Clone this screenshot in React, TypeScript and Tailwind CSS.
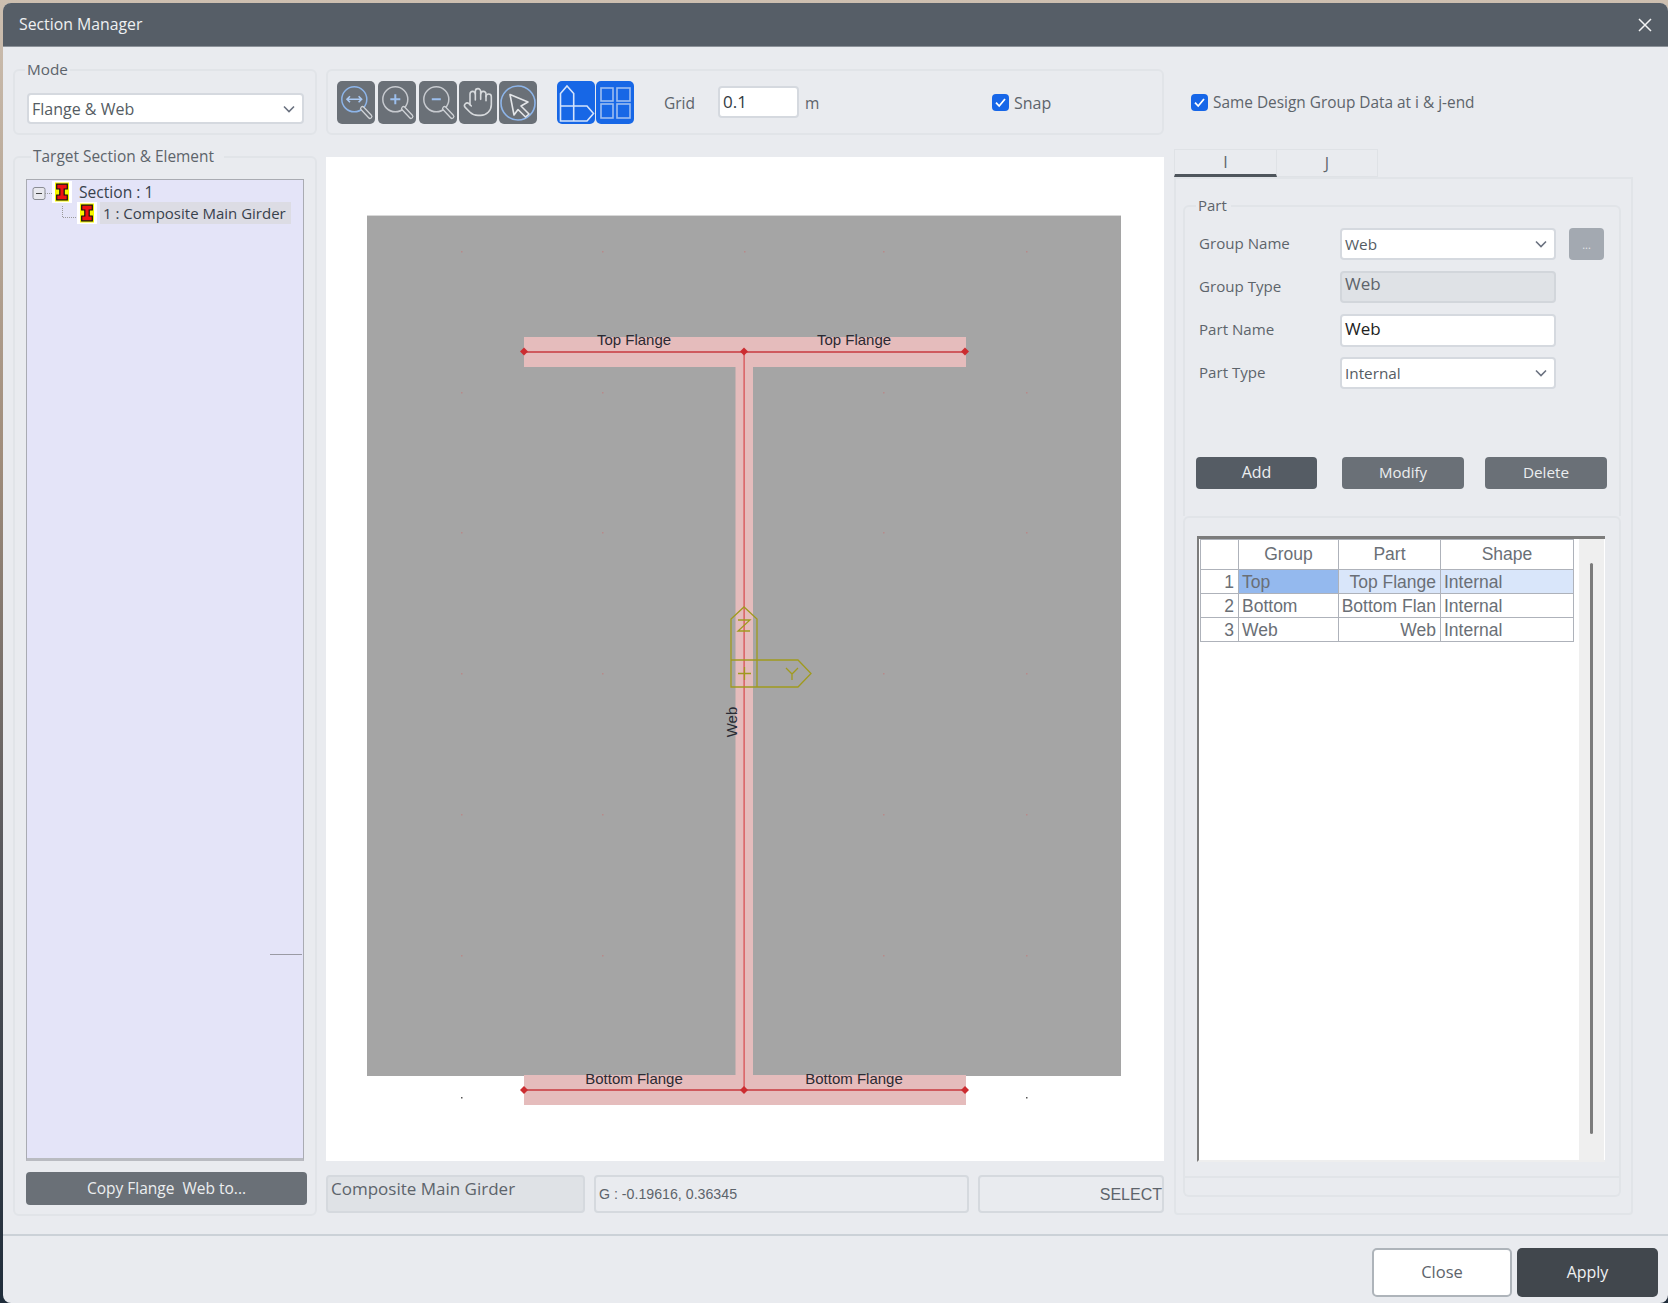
import React from "react";
import { Hand } from "lucide-react";

const Chevron = () => (
  <svg width="14" height="14" viewBox="0 0 14 14" className="shrink-0">
    <path d="M2 4.5 L7 9.5 L12 4.5" fill="none" stroke="#6b7280" strokeWidth="1.6" />
  </svg>
);

const Check = () => (
  <svg width="17" height="17" viewBox="0 0 17 17" className="shrink-0">
    <rect width="17" height="17" rx="4" fill="#1666e8" />
    <path d="M4 8.6 L7.2 12 L13 5" fill="none" stroke="#fff" strokeWidth="1.8" />
  </svg>
);

const IBeam = () => (
  <svg width="20" height="22" viewBox="0 0 20 22" className="shrink-0">
    <rect width="20" height="22" fill="#fff" />
    <rect x="3" y="1.5" width="14" height="19" fill="#f6f600" />
    <path d="M4.7 3.2 H15.3 V8 H12.2 V14 H15.3 V18.8 H4.7 V14 H7.8 V8 H4.7 Z" fill="#ee1111" stroke="#111" strokeWidth="1.2" />
  </svg>
);

const Glass = ({ ring, inner }: { ring: string; inner: React.ReactNode }) => (
  <svg width="38" height="43" viewBox="0 0 38 43">
    <circle cx="17.3" cy="18.3" r="12.5" fill="none" stroke={ring} strokeWidth="1.5" />
    {inner}
    <path d="M25.5 27.5 L33 35.5" stroke="#cfd2d6" strokeWidth="5" strokeLinecap="round" />
    <path d="M25.5 27.5 L33 35.5" stroke="#6a7077" strokeWidth="2.4" strokeLinecap="round" />
  </svg>
);

const ToolBtn = ({ children, blue, className }: { children: React.ReactNode; blue?: boolean; className: string }) => (
  <div className={`w-[38px] h-[43px] rounded-[5px] flex items-center justify-center shrink-0 ${blue ? "bg-[#1767e6]" : "bg-[#6a7077]"} ${className}`}>
    {children}
  </div>
);

const Group = ({ legend, legendClass, className, children }: { legend: string; legendClass: string; className: string; children: React.ReactNode }) => (
  <div className={`relative border-2 border-[#e1e4e8] rounded-[6px] ${className}`}>
    <span className={`absolute bg-[#e9ebef] px-[2px] leading-[20px] text-[#5d646b] whitespace-nowrap ${legendClass}`}>{legend}</span>
    {children}
  </div>
);

const FieldRow = ({ label, children }: { label: string; children: React.ReactNode }) => (
  <div className="flex items-center h-[32px]">
    <span className="w-[144px] shrink-0 pl-[3px] pb-[2px] text-[15.1px] text-[#5d646b] whitespace-nowrap">{label}</span>
    {children}
  </div>
);

const SelectBox = ({ value, className }: { value: string; className: string }) => (
  <div className={`flex items-center justify-between bg-white border-2 border-[#d5d9df] rounded-[4px] pr-[6px] text-[#555c63] ${className}`}>
    <span>{value}</span>
    <Chevron />
  </div>
);

const ActionBtn = ({ label, className }: { label: string; className: string }) => (
  <div className={`h-[32px] rounded-[4px] flex items-center justify-center pb-[2px] text-[#eceef0] ${className}`}>{label}</div>
);

const rows = [
  { n: "1", g: "Top", p: "Top Flange", s: "Internal", sel: true },
  { n: "2", g: "Bottom", p: "Bottom Flan", s: "Internal", sel: false },
  { n: "3", g: "Web", p: "Web", s: "Internal", sel: false },
];

const dotXs = [461, 602, 744, 883, 1026];
const dotYs = [251, 392, 532, 673, 814, 955];

const Diamond = ({ x, y }: { x: number; y: number }) => (
  <path d={`M${x - 4} ${y} L${x} ${y - 4} L${x + 4} ${y} L${x} ${y + 4} Z`} fill="#cc2c30" />
);

const Section = () => (
  <svg width="838" height="1004" viewBox="326 157 838 1004" className="block">
    <rect x="367" y="216" width="754" height="860" fill="#a5a5a5" />
    <rect x="367" y="215" width="754" height="1" fill="#d8d8d8" />
    {dotYs.map((y) => dotXs.map((x) => <rect key={`${x}-${y}`} x={x} y={y} width="1.5" height="1.5" fill="#b88a8a" />))}
    {dotXs.map((x) => <rect key={x} x={x} y="1097" width="1.5" height="1.5" fill="#555" />)}
    <rect x="524" y="337" width="442" height="30" fill="#e5bcbc" />
    <rect x="735.5" y="367" width="17.5" height="709" fill="#e5bcbc" />
    <rect x="524" y="1075" width="442" height="30" fill="#e5bcbc" />
    <rect x="524" y="351" width="441" height="2" fill="#cf5a5e" />
    <rect x="524" y="1089" width="441" height="2" fill="#cf5a5e" />
    <rect x="743.5" y="352" width="1.2" height="738" fill="#d8484c" />
    <Diamond x={524} y={351.5} />
    <Diamond x={744} y={351.5} />
    <Diamond x={965} y={351.5} />
    <Diamond x={524} y={1090} />
    <Diamond x={744} y={1090} />
    <Diamond x={965} y={1090} />
    <g fontFamily="'Liberation Sans', Arial, sans-serif" fontSize="15" fill="#2a2a33" textAnchor="middle">
      <text x="634" y="345">Top Flange</text>
      <text x="854" y="345">Top Flange</text>
      <text x="634" y="1084">Bottom Flange</text>
      <text x="854" y="1084">Bottom Flange</text>
      <text transform="translate(737 722) rotate(-90)">Web</text>
    </g>
    <g fill="none" stroke="#a09a1e" strokeWidth="1.3">
      <path d="M731 660 V619 L744 607 L757 619 V687 H731 V660 H798 L811 673.5 L798 687 H757" />
      <path d="M738 620 H750 L738 631 H750" />
      <path d="M738 673.5 H751 M744.5 667 V680" />
      <path d="M786 668 L792 674 L798 668 M792 674 V680" />
    </g>
  </svg>
);

export default function App() {
  return (
    <div className="w-[1668px] h-[1303px] overflow-hidden pt-[3px] pl-[3px] bg-[linear-gradient(180deg,#cdbfb0_0%,#a08d7b_35%,#5a5a5e_65%,#1f2c3a_100%)] [font-family:Open_Sans,Noto_Sans,sans-serif]">
      <div className="w-[1665px] h-[1300px] bg-[#e9ebef] rounded-[8px] overflow-hidden flex flex-col">
        {/* Title bar */}
        <div className="h-[44px] shrink-0 bg-[#565e67] flex items-center justify-between pl-[16px] pr-[16px] pt-[1px] border-b border-[#8c9299]">
          <span className="text-[15.8px] text-[#eef0f2]">Section Manager</span>
          <svg width="14" height="14" viewBox="0 0 14 14">
            <path d="M1 1 L13 13 M13 1 L1 13" stroke="#f2f3f4" strokeWidth="1.5" />
          </svg>
        </div>

        {/* Body */}
        <div className="h-[1187px] shrink-0 flex pt-[22px] pl-[10px]">
          {/* Left column */}
          <div className="w-[304px] shrink-0 flex flex-col">
            <Group legend="Mode" legendClass="-top-[12px] left-[10px] text-[15.3px]" className="h-[66px] shrink-0 pt-[22px] pl-[12px] pr-[11px]">
              <SelectBox value="Flange & Web" className="h-[31px] pl-[3px] text-[16px]" />
            </Group>
            <Group legend="Target Section & Element" legendClass="-top-[12px] left-[16px] pr-[10px] text-[15.45px]" className="mt-[21px] h-[1060px] shrink-0 pt-[21px] pl-[11px] pr-[8px] flex flex-col">
              <div className="relative w-[278px] h-[982px] bg-[#e4e4f8] border border-[#a9abb2] border-b-[3px] border-b-[#b9bbc1] pt-[1px] pl-[1px] text-[15px] text-[#38414c]">
                <div className="flex items-center h-[21px]">
                  <svg width="20" height="21" viewBox="0 0 20 21" className="shrink-0 ml-[4px]">
                    <rect x="1" y="6.5" width="12" height="12" rx="2" fill="#e8e8ee" stroke="#8b8d94" />
                    <path d="M4 12.5 H10" stroke="#444" strokeWidth="1.2" />
                    <path d="M13 12.5 H20" stroke="#999" strokeDasharray="1 1" />
                  </svg>
                  <IBeam />
                  <span className="ml-[7px] pt-[2px] whitespace-nowrap text-[15.6px]">Section : 1</span>
                </div>
                <div className="flex items-center h-[22px]">
                  <svg width="14" height="14" viewBox="0 0 14 14" className="shrink-0 ml-[34px]">
                    <path d="M0.5 0 V11.5 H14" fill="none" stroke="#999" strokeDasharray="1 1" />
                  </svg>
                  <div className="ml-[1px]"><IBeam /></div>
                  <span className="ml-[3px] bg-[#dcdce4] h-[22px] leading-[22px] w-[191px] pl-[3px] whitespace-nowrap">1 : Composite Main Girder</span>
                </div>
                <div className="absolute left-[243px] top-[774px] w-[32px] h-[1px] bg-[#9a9aa4]" />
              </div>
              <div className="mt-[11px] w-[281px] h-[33px] shrink-0 rounded-[4px] bg-[#6a7077] flex items-center justify-center text-[15.5px] text-[#eceef0]">
                Copy Flange &nbsp;Web to...
              </div>
            </Group>
          </div>

          {/* Centre column */}
          <div className="w-[838px] ml-[9px] shrink-0 flex flex-col">
            <div className="h-[66px] shrink-0 border-2 border-[#e1e4e8] rounded-[6px] flex items-center pl-[9px] text-[15.5px] text-[#5d646b]">
              <ToolBtn className="">
                <Glass
                  ring="#8db5ea"
                  inner={<path d="M10 18.3 H24.6 M13 15.3 L10 18.3 L13 21.3 M21.6 15.3 L24.6 18.3 L21.6 21.3" fill="none" stroke="#a9c8f2" strokeWidth="1.6" />}
                />
              </ToolBtn>
              <ToolBtn className="ml-[3px]">
                <Glass ring="#c7cacf" inner={<path d="M12.3 18.3 H22.3 M17.3 13.3 V23.3" stroke="#9cbfee" strokeWidth="2" />} />
              </ToolBtn>
              <ToolBtn className="ml-[3px]">
                <Glass ring="#c7cacf" inner={<path d="M12.8 18.3 H21.8" stroke="#9cbfee" strokeWidth="2" />} />
              </ToolBtn>
              <ToolBtn className="ml-[2px]">
                <Hand size={32} strokeWidth={1.2} color="#d6d9dc" />
              </ToolBtn>
              <ToolBtn className="ml-[2px]">
                <svg width="38" height="43" viewBox="0 0 38 43">
                  <circle cx="19" cy="22" r="17" fill="none" stroke="#8db5ea" strokeWidth="1.6" />
                  <path d="M11 13.5 L29 21 L22 25 L30 33 L26.5 36 L19 28.5 L15 34 Z" fill="none" stroke="#e3e5e8" strokeWidth="1.6" strokeLinejoin="round" />
                </svg>
              </ToolBtn>
              <ToolBtn blue className="ml-[20px]">
                <svg width="38" height="43" viewBox="0 0 38 43">
                  <path d="M3.5 25 V12.5 L10 5 L16.7 12.5 V40 H3.5 V25 H30 L36.5 32.5 L30 40 H16.7" fill="none" stroke="#d4e3fb" strokeWidth="1.6" />
                </svg>
              </ToolBtn>
              <ToolBtn blue className="ml-[1px]">
                <svg width="38" height="43" viewBox="0 0 38 43">
                  <g fill="none" stroke="#9dbdf0" strokeWidth="1.6">
                    <rect x="5" y="7" width="12" height="13" />
                    <rect x="21" y="7" width="13" height="13" />
                    <rect x="5" y="23" width="12" height="14" />
                    <rect x="21" y="23" width="13" height="14" />
                  </g>
                </svg>
              </ToolBtn>
              <span className="ml-[30px] w-[54px] shrink-0 pt-[3px]">Grid</span>
              <div className="w-[81px] h-[32px] shrink-0 bg-white border-2 border-[#d5d9df] rounded-[4px] pl-[3px] leading-[28px] text-[17px] text-[#333a41]">0.1</div>
              <span className="ml-[6px] w-[187px] shrink-0 pt-[3px]">m</span>
              <Check />
              <span className="ml-[5px] pt-[2px] text-[16px]">Snap</span>
            </div>
            <div className="mt-[22px] h-[1004px] shrink-0 bg-white">
              <Section />
            </div>
            <div className="mt-[14px] h-[38px] shrink-0 flex text-[#5d646b]">
              <div className="w-[259px] shrink-0 bg-[#dfe2e6] border-2 border-[#d5d9de] rounded-[4px] pl-[3px] leading-[24px] text-[17px] whitespace-nowrap">Composite Main Girder</div>
              <div className="ml-[9px] w-[375px] shrink-0 border-2 border-[#d5d9de] rounded-[4px] pl-[3px] flex items-center pt-[2px] text-[14.2px] [font-family:Liberation_Sans,Arial,sans-serif]">G : -0.19616, 0.36345</div>
              <div className="ml-[9px] w-[186px] shrink-0 border-2 border-[#d5d9de] rounded-[4px] flex items-center justify-end pt-[2px] text-[16px] [font-family:Liberation_Sans,Arial,sans-serif]">SELECT</div>
            </div>
          </div>

          {/* Right column */}
          <div className="w-[459px] ml-[10px] shrink-0 flex flex-col">
            <div className="h-[66px] shrink-0 flex items-center pl-[17px] text-[15.4px] text-[#5d646b]">
              <Check />
              <span className="ml-[5px] pt-[2px] whitespace-nowrap">Same Design Group Data at i &amp; j-end</span>
            </div>
            <div className="mt-[14px] h-[28px] shrink-0 flex text-[16px] text-[#5d646b]">
              <div className="w-[103px] h-[28px] border border-[#dfe2e6] border-b-[3px] border-b-[#4e555c] flex items-center justify-center">I</div>
              <div className="w-[101px] h-[28px] border border-l-0 border-[#dfe2e6] flex items-center justify-center">J</div>
            </div>
            <div className="h-[1038px] shrink-0 border-2 border-[#e1e4e8] rounded-b-[4px] pt-[26px] pl-[7px] pr-[10px]">
              <Group legend="Part" legendClass="-top-[12px] left-[11px] pr-[4px] text-[15px]" className="h-[311px] border-b-0 rounded-b-none pt-[21px] pl-[11px]">
                <div className="flex flex-col gap-[11px]">
                  <FieldRow label="Group Name">
                    <SelectBox value="Web" className="w-[216px] h-[32px] pl-[3px] text-[15.3px]" />
                    <div className="ml-[13px] w-[35px] h-[32px] rounded-[4px] bg-[#a3a9b1] flex items-center justify-center text-[11px] leading-none text-[#e4e6e8]">...</div>
                  </FieldRow>
                  <FieldRow label="Group Type">
                    <div className="w-[216px] h-[32px] bg-[#dfe2e6] border-2 border-[#d2d6db] rounded-[4px] pl-[3px] leading-[22px] text-[17px] text-[#5d646b]">Web</div>
                  </FieldRow>
                  <FieldRow label="Part Name">
                    <div className="w-[216px] h-[33px] bg-white border-2 border-[#d5d9df] rounded-[4px] pl-[3px] leading-[25px] text-[17px] text-[#222]">Web</div>
                  </FieldRow>
                  <FieldRow label="Part Type">
                    <SelectBox value="Internal" className="w-[216px] h-[32px] pl-[3px] text-[15.3px]" />
                  </FieldRow>
                </div>
                <div className="mt-[68px] flex">
                  <ActionBtn label="Add" className="w-[121px] bg-[#555c64] text-[16px]" />
                  <ActionBtn label="Modify" className="ml-[25px] w-[122px] bg-[#6a7077] text-[15px]" />
                  <ActionBtn label="Delete" className="ml-[21px] w-[122px] bg-[#6a7077] text-[15.3px]" />
                </div>
              </Group>
              <div className="h-[662px] border-2 border-[#e1e4e8] rounded-t-[6px] pt-[18px] pl-[12px]">
                <div className="w-[408px] h-[626px] flex bg-white border-t-[3px] border-l-2 border-[#7c7c7c] border-b-2 border-b-[#eeeeee] [font-family:Liberation_Sans,Arial,sans-serif] text-[17.5px] text-[#6a6f76]">
                  <table className="ml-[1px] w-[373px] h-[102px] table-fixed border-collapse self-start">
                    <colgroup>
                      <col className="w-[38px]" />
                      <col className="w-[100px]" />
                      <col className="w-[102px]" />
                      <col className="w-[133px]" />
                    </colgroup>
                    <thead>
                      <tr className="h-[30px]">
                        <th className="border border-[#aeb2ba] font-normal" />
                        <th className="border border-[#aeb2ba] font-normal">Group</th>
                        <th className="border border-[#aeb2ba] font-normal">Part</th>
                        <th className="border border-[#aeb2ba] font-normal">Shape</th>
                      </tr>
                    </thead>
                    <tbody>
                      {rows.map((r) => (
                        <tr key={r.n} className={`h-[24px] ${r.sel ? "bg-[#d9e6fa]" : ""}`}>
                          <td className="border border-[#aeb2ba] bg-white text-right pr-[4px] leading-[22px] p-0">{r.n}</td>
                          <td className={`border border-[#aeb2ba] pl-[3px] leading-[22px] p-0 ${r.sel ? "bg-[#94b9ee]" : ""}`}>{r.g}</td>
                          <td className="border border-[#aeb2ba] text-right pr-[4px] leading-[22px] p-0 whitespace-nowrap overflow-hidden">{r.p}</td>
                          <td className="border border-[#aeb2ba] pl-[3px] leading-[22px] p-0">{r.s}</td>
                        </tr>
                      ))}
                    </tbody>
                  </table>
                  <div className="ml-[5px] w-[25px] bg-[#efefef] pl-[11px] pt-[24px]">
                    <div className="w-[3px] h-[571px] bg-[#7c7c7c] rounded-[2px]" />
                  </div>
                </div>
              </div>
              <div className="h-[19px] border-2 border-t-0 border-[#e1e4e8] rounded-b-[6px]" />
            </div>
          </div>
        </div>

        {/* Footer */}
        <div className="flex-1 border-t-2 border-[#cbd1d7] flex justify-end items-start pt-[12px] pr-[10px]">
          <div className="w-[140px] h-[49px] bg-white border-2 border-[#aeb4ba] rounded-[5px] flex items-center justify-center text-[16.5px] text-[#5d646b]">Close</div>
          <div className="ml-[5px] w-[141px] h-[49px] bg-[#41474d] rounded-[5px] flex items-center justify-center pb-[2px] text-[16px] text-[#f0f1f2]">Apply</div>
        </div>
      </div>
    </div>
  );
}
